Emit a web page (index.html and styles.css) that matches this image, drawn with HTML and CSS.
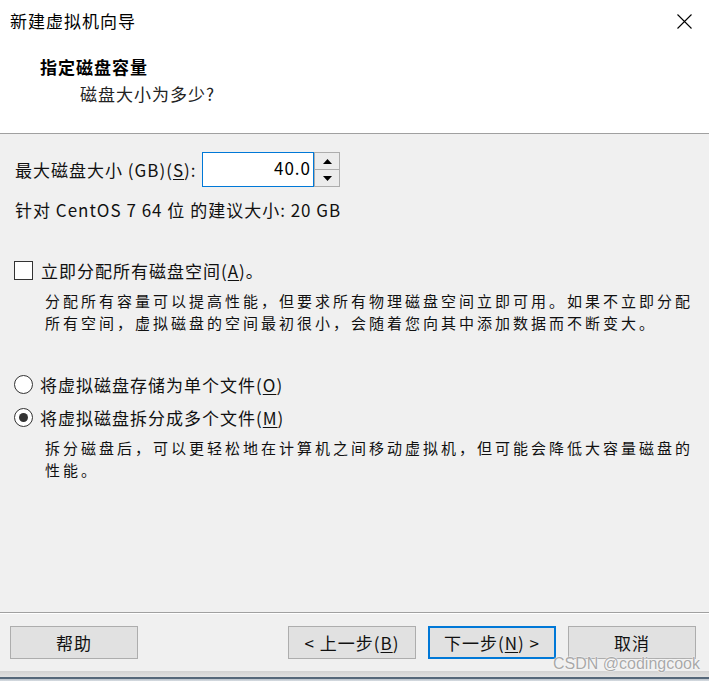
FILE: index.html
```html
<!DOCTYPE html>
<html lang="zh-CN">
<head>
<meta charset="utf-8">
<title>新建虚拟机向导</title>
<link rel="stylesheet" href="styles.css">
</head>
<body>
<div class="window">
  <header class="header">
    <div class="titlebar">
      <span class="title">新建虚拟机向导</span>
      <svg class="close" width="15" height="15" viewBox="0 0 15 15"><path d="M0.5 0.5 L14.5 14.5 M14.5 0.5 L0.5 14.5" stroke="#000" stroke-width="1.1" fill="none"/></svg>
    </div>
    <div class="heading">指定磁盘容量</div>
    <div class="subheading">磁盘大小为多少?</div>
  </header>

  <main class="content">
    <div class="size-row">
      <label class="size-label">最大磁盘大小 (GB)(<u>S</u>):</label>
      <div class="input">40.0</div>
      <div class="spinner">
        <div class="spin-btn"><svg width="9" height="5" viewBox="0 0 9 5"><path d="M0 5 L4.5 0 L9 5 Z" fill="#000"/></svg></div>
        <div class="spin-btn"><svg width="9" height="5" viewBox="0 0 9 5"><path d="M0 0 L9 0 L4.5 5 Z" fill="#000"/></svg></div>
      </div>
    </div>
    <div class="recommend">针对 CentOS 7 64 位 的建议大小: 20 GB</div>

    <div class="option check-row">
      <span class="checkbox"></span>
      <span>立即分配所有磁盘空间(<u>A</u>)。</span>
    </div>
    <div class="desc first-desc">
      <div class="desc-line">分配所有容量可以提高性能，但要求所有物理磁盘空间立即可用。如果不立即分配</div>
      <div class="desc-line">所有空间，虚拟磁盘的空间最初很小，会随着您向其中添加数据而不断变大。</div>
    </div>

    <div class="option radio-row radio-first">
      <span class="radio"></span>
      <span>将虚拟磁盘存储为单个文件(<u>O</u>)</span>
    </div>
    <div class="option radio-row radio-second">
      <span class="radio checked"></span>
      <span>将虚拟磁盘拆分成多个文件(<u>M</u>)</span>
    </div>
    <div class="desc">
      <div class="desc-line">拆分磁盘后，可以更轻松地在计算机之间移动虚拟机，但可能会降低大容量磁盘的</div>
      <div class="desc-line">性能。</div>
    </div>
  </main>

  <footer class="footer">
    <button class="btn help">帮助</button>
    <button class="btn">&lt; 上一步(<u>B</u>)</button>
    <button class="btn default">下一步(<u>N</u>) &gt;</button>
    <button class="btn">取消</button>
    <span class="watermark">CSDN @codingcook</span>
  </footer>
</div>
<div class="under"></div>
</body>
</html>
```

FILE: styles.css
```css
html, body {
  margin: 0;
  padding: 0;
}
body {
  width: 709px;
  height: 681px;
  overflow: hidden;
  background: #e6e6e6;
  font-family: "Noto Sans CJK SC", "Noto Sans", sans-serif;
  font-size: 17px;
  letter-spacing: 1px;
  color: #111;
}
.window {
  height: 671px;
  display: flex;
  flex-direction: column;
  background: #f0f0f0;
  position: relative;
}
.header {
  height: 133px;
  background: #fff;
  border-bottom: 1px solid #a0a0a0;
  flex: none;
}
.titlebar {
  height: 42px;
  display: flex;
  align-items: center;
  justify-content: space-between;
  padding-left: 10px;
  padding-right: 17px;
}
.title {
  line-height: 24px;
  color: #000;
}
.close {
  display: block;
  margin-top: 1px;
}
.heading {
  margin-top: 13px;
  margin-left: 40px;
  line-height: 24px;
  font-weight: 700;
  color: #000;
}
.subheading {
  margin-top: 3px;
  margin-left: 80px;
  line-height: 24px;
  color: #222;
}
.content {
  flex: 1;
  padding: 18px 0 0 15px;
}
.size-row {
  display: flex;
  align-items: center;
  height: 35px;
}
.size-label {
  width: 187px;
  line-height: 24px;
  white-space: nowrap;
}
.input {
  box-sizing: border-box;
  width: 112px;
  height: 35px;
  border: 1px solid #0078d7;
  background: #fff;
  text-align: right;
  padding-right: 2px;
  line-height: 30px;
  color: #000;
}
.spinner {
  box-sizing: border-box;
  width: 26px;
  height: 35px;
  display: flex;
  flex-direction: column;
  border: 1px solid #adadad;
  border-left: none;
  background: #fff;
}
.spin-btn {
  flex: 1;
  display: flex;
  align-items: center;
  justify-content: center;
  background: #ececec;
  border-left: 1px solid #adadad;
}
.spin-btn + .spin-btn {
  border-top: 1px solid #adadad;
}
.recommend {
  margin-top: 11px;
  line-height: 24px;
  white-space: nowrap;
}
.option {
  display: flex;
  align-items: center;
  height: 24px;
  white-space: nowrap;
  margin-left: -1px;
}
.check-row {
  margin-top: 36px;
  gap: 8px;
}
.checkbox {
  box-sizing: border-box;
  width: 19px;
  height: 19px;
  border: 1px solid #333;
  background: #fff;
  flex: none;
}
.desc {
  margin: 8px 0 0 30px;
  font-size: 15px;
  letter-spacing: 3px;
}
.desc-line {
  height: 22px;
  line-height: 22px;
  white-space: nowrap;
}
.radio-row {
  gap: 7px;
}
.radio-first {
  margin-top: 38px;
}
.radio-second {
  margin-top: 9px;
}
.radio {
  box-sizing: border-box;
  width: 19px;
  height: 19px;
  border: 1px solid #333;
  border-radius: 50%;
  background: #fff;
  flex: none;
  display: flex;
  align-items: center;
  justify-content: center;
}
.radio.checked::after {
  content: "";
  width: 9px;
  height: 9px;
  border-radius: 50%;
  background: #333;
}
u {
  text-decoration-thickness: 1px;
  text-underline-offset: 2px;
}
.footer {
  flex: none;
  box-sizing: border-box;
  height: 59px;
  border-top: 1px solid #a0a0a0;
  box-shadow: inset 0 1px 0 #fff;
  display: flex;
  align-items: flex-start;
  gap: 12px;
  padding: 13px 13px 0 10px;
  position: relative;
}
.btn {
  box-sizing: border-box;
  width: 128px;
  height: 33px;
  border: 1px solid #adadad;
  background: #e1e1e1;
  font-family: inherit;
  font-size: 17px;
  letter-spacing: 1px;
  color: #111;
  padding: 0;
  line-height: 24px;
}
.btn.help {
  margin-right: auto;
}
.btn.default {
  border: 2px solid #0078d7;
}
.watermark {
  position: absolute;
  left: 553px;
  top: 42px;
  font-family: "Liberation Sans", Arial, sans-serif;
  font-size: 16px;
  letter-spacing: 0;
  line-height: 18px;
  color: #a9a9a9;
  text-shadow: 0 0 1px #fff, 0 0 2px #fff;
}
.under {
  height: 10px;
  background: linear-gradient(to bottom, #d3d3d3 0, #e2e2e2 6px, #56687a 6px, #56687a 8px, #b9c2cb 8px, #d8dde2 10px);
}
```
